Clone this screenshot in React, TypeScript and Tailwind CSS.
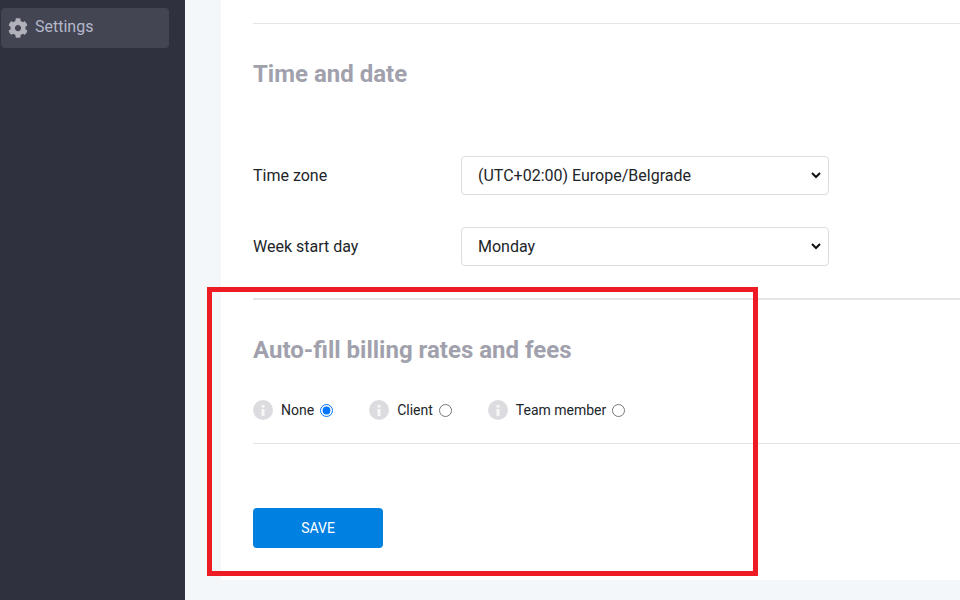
import { FaCog } from 'react-icons/fa';

const RateOption = ({
  label,
  checked,
  className,
}: {
  label: string;
  checked?: boolean;
  className?: string;
}) => {
  return (
    <label className={`flex items-center ${className ?? ''}`}>
      <span className="flex h-5 w-5 items-center justify-center rounded-full bg-[#dcdce0] text-[#f7f7f8]">
        <svg width="4" height="11" viewBox="0 0 4 11" fill="currentColor">
          <rect x="0.5" y="0" width="3" height="2.5" />
          <rect x="0.5" y="4" width="3" height="7" />
        </svg>
      </span>
      <span className="ml-[8px] text-[14px] leading-5 text-[#212529]">{label}</span>
      <input
        type="radio"
        name="autofill"
        defaultChecked={checked}
        className="ml-[6px] h-[13px] w-[13px] m-0"
      />
    </label>
  );
};

const SelectRow = ({ label, value, className }: { label: string; value: string; className?: string }) => {
  return (
    <div className={`flex items-center ${className ?? ''}`}>
      <span className="w-[208px] text-[16px] text-[#212529]">{label}</span>
      <div className="relative w-[368px]">
        <select
          defaultValue={value}
          className="h-[39px] w-full appearance-none rounded border border-[#dddddd] bg-white pl-[16px] text-[16px] text-[#212529]"
        >
          <option>{value}</option>
        </select>
        {/* chevron */}
        <svg
          className="pointer-events-none absolute top-[16px] right-[8px]"
          width="10"
          height="7"
          viewBox="0 0 10 7"
          fill="none"
          stroke="#111111"
          strokeWidth="2"
        >
          <path d="M1 1l4 4 4-4" />
        </svg>
      </div>
    </div>
  );
};

export default function App() {
  return (
    <div className="relative flex h-[600px] w-[960px] overflow-hidden bg-[#f4f7fa] font-['Roboto',sans-serif]">
      <aside className="w-[185px] shrink-0 bg-[#2f313f] pt-2 pl-px">
        <div className="flex h-10 w-[168px] items-center rounded bg-[#434552] pl-[7px] pb-[1px] text-[16px] text-[#b4b8cc]">
          <FaCog size={20} className="shrink-0 text-[#b1b1bb]" />
          <span className="ml-[7px] mb-[1px]">Settings</span>
        </div>
      </aside>
      <main className="flex-1 pl-[36px]">
        <div className="h-[580px] bg-white pl-[32px]">
          <div className="pt-[23px]">
            <div className="border-t border-[#e5e5e5]" />
          </div>
          <h2 className="mt-[34px] text-[24px] leading-[32px] font-bold text-[#a1a1ad]">Time and date</h2>
          <SelectRow label="Time zone" value="(UTC+02:00) Europe/Belgrade" className="mt-[66px]" />
          <SelectRow label="Week start day" value="Monday" className="mt-[32px]" />
          <div className="mt-[32px] border-t-2 border-[#e5e5e5]" />
          <h2 className="mt-[34px] text-[24px] leading-[32px] font-bold text-[#a1a1ad]">
            Auto-fill billing rates and fees
          </h2>
          <div className="mt-[34px] flex items-center">
            <RateOption label="None" checked />
            <RateOption label="Client" className="ml-[36px]" />
            <RateOption label="Team member" className="ml-[36px]" />
          </div>
          <div className="mt-[23px] border-t border-[#e5e5e5]" />
          <button className="mt-[64px] h-10 w-[130px] rounded bg-[#0080e1] text-[14px] font-normal text-white">
            SAVE
          </button>
        </div>
      </main>
      <div className="absolute top-[287px] left-[207px] h-[289px] w-[551px] border-[5px] border-[#ed1c24]" />
    </div>
  );
}
